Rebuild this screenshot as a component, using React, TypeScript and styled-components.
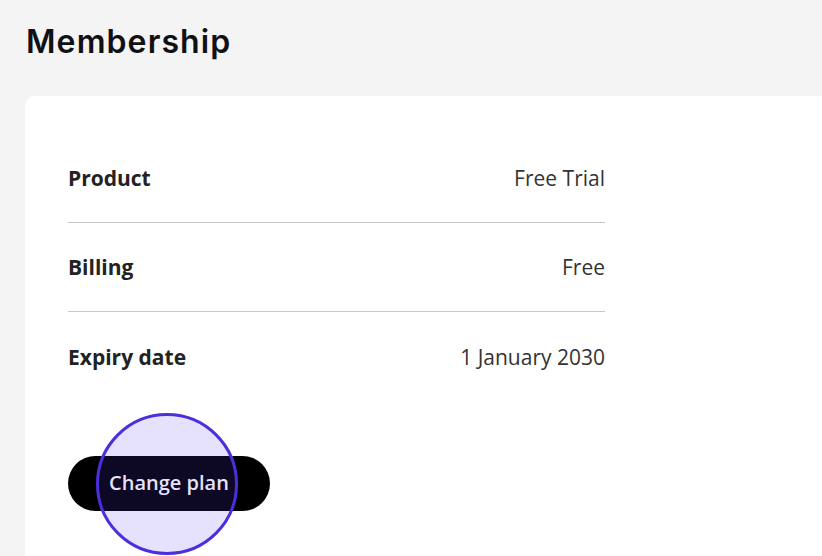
import * as React from "react";
import styled, { createGlobalStyle } from "styled-components";

const GlobalStyle = createGlobalStyle`
    html, body {
        margin: 0;
        padding: 0;
        background: #f4f4f4;
    }
    * {
        box-sizing: border-box;
    }
`

const Page = styled.div`
    display: flex;
    flex-direction: column;
    height: 100vh;
    overflow: hidden;
    padding-left: 25px;
    background: #f4f4f4;
`

const Title = styled.h1`
    margin: 23px 0 0 1px;
    height: 73px;
    font-family: "Inter", "Noto Sans", sans-serif;
    font-weight: 600;
    font-size: 32px;
    line-height: 38px;
    letter-spacing: 1.1px;
    color: #111114;
`

const Card = styled.section`
    flex: 1;
    background: #ffffff;
    border-top-left-radius: 10px;
    padding: 38px 0 0 43px;
`

const DetailList = styled.dl`
    width: 537px;
    margin: 0;
`

const Row = styled.div<{ $divider?: boolean }>`
    display: flex;
    align-items: center;
    justify-content: space-between;
    height: 89px;
    border-bottom: ${(p) => (p.$divider ? "1px solid #c6c6c6" : "none")};
    font-family: "Open Sans", "Noto Sans", sans-serif;
    font-size: 21px;
`

const Label = styled.dt`
    font-weight: 700;
    color: #222222;
`

const Value = styled.dd`
    margin: 0;
    font-weight: 400;
    color: #333333;
`

const ButtonWrap = styled.div`
    position: relative;
    width: 202px;
    margin-top: 55px;
`

const PlanButton = styled.button`
    display: flex;
    align-items: center;
    justify-content: center;
    width: 202px;
    height: 55px;
    border: none;
    border-radius: 28px;
    background: #000000;
    color: #ffffff;
    font-family: "Open Sans", "Noto Sans", sans-serif;
    font-weight: 600;
    font-size: 20px;
    padding: 0 0 2px 0;
    cursor: pointer;
`

// click highlight drawn over the button
const Highlight = styled.span`
    position: absolute;
    left: 28px;
    top: -43px;
    width: 142px;
    height: 142px;
    border-radius: 50%;
    border: 3px solid #4a2fdd;
    background: rgba(84, 52, 232, 0.15);
    pointer-events: none;
`

const rows = [
    { label: "Product", value: "Free Trial" },
    { label: "Billing", value: "Free" },
    { label: "Expiry date", value: "1 January 2030" },
]

export default function App() {
    return (
        <React.Fragment>
            <GlobalStyle />
            <Page>
                <Title>Membership</Title>
                <Card>
                    <DetailList>
                        {rows.map((row, idx) => (
                            <Row key={row.label} $divider={idx < rows.length - 1}>
                                <Label>{row.label}</Label>
                                <Value>{row.value}</Value>
                            </Row>
                        ))}
                    </DetailList>
                    <ButtonWrap>
                        <PlanButton>Change plan</PlanButton>
                        <Highlight />
                    </ButtonWrap>
                </Card>
            </Page>
        </React.Fragment>
    )
}
